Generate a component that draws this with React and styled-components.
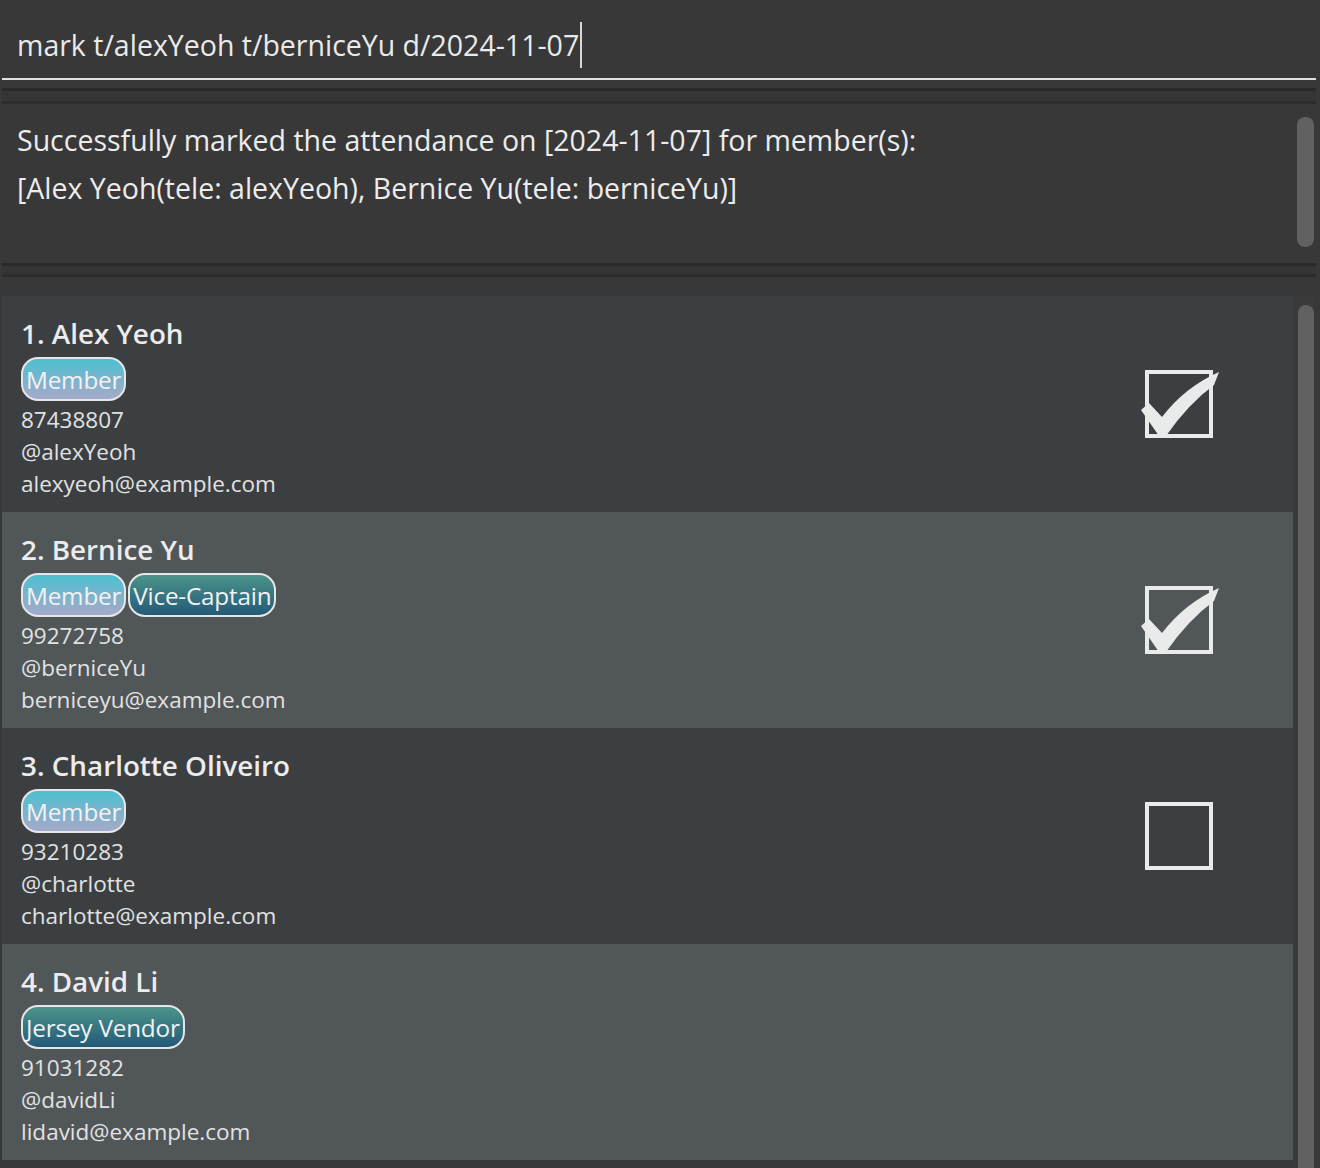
import styled, { createGlobalStyle } from 'styled-components';

const GlobalStyle = createGlobalStyle`
	html, body {
		margin: 0;
		padding: 0;
		background: #383838;
	}
	body {
		font-family: 'Open Sans', 'Noto Sans', sans-serif;
	}
`;

// attendance: true = marked, false = not marked, null = no box shown
const members = [
	{
		name: 'Alex Yeoh',
		tags: [{ label: 'Member', kind: 'member' }],
		phone: '87438807',
		tele: '@alexYeoh',
		email: 'alexyeoh@example.com',
		attendance: true,
	},
	{
		name: 'Bernice Yu',
		tags: [
			{ label: 'Member', kind: 'member' },
			{ label: 'Vice-Captain', kind: 'role' },
		],
		phone: '99272758',
		tele: '@berniceYu',
		email: 'berniceyu@example.com',
		attendance: true,
	},
	{
		name: 'Charlotte Oliveiro',
		tags: [{ label: 'Member', kind: 'member' }],
		phone: '93210283',
		tele: '@charlotte',
		email: 'charlotte@example.com',
		attendance: false,
	},
	{
		name: 'David Li',
		tags: [{ label: 'Jersey Vendor', kind: 'role' }],
		phone: '91031282',
		tele: '@davidLi',
		email: 'lidavid@example.com',
		attendance: null,
	},
];

const AttendanceBox = ({ checked }) => (
	<BoxIcon width='68' height='68' viewBox='0 0 68 68'>
		<rect x='2' y='2' width='64' height='64' fill='none' stroke='#e9eaea' strokeWidth='4' />
		{checked && (
			<path
				d='M -4 40 L 4 33 L 17 47 Q 40 17 74 2 L 69 15 Q 43 34 21 66 L 14 66 Z'
				fill='#e9eaea'
			/>
		)}
	</BoxIcon>
);

export default function App() {
	return (
		<Window>
			<GlobalStyle />
			<CommandBox>
				<CommandText>mark t/alexYeoh t/berniceYu d/2024-11-07</CommandText>
				<Caret />
			</CommandBox>
			<Splitter $lead={8} $height={16} />
			<ResultPane>
				<ResultText>
					Successfully marked the attendance on [2024-11-07] for member(s):
					<br />
					[Alex Yeoh(tele: alexYeoh), Bernice Yu(tele: berniceYu)]
				</ResultText>
				<ScrollThumb />
			</ResultPane>
			<Splitter $lead={0} $height={14} />
			<ListPane>
				<CardList>
					{members.map((m, i) => (
						<Card key={m.tele} $alt={i % 2 === 1}>
							<Details>
								<Name>
									{i + 1}. {m.name}
								</Name>
								<Tags>
									{m.tags.map((t) => (
										<Tag key={t.label} $kind={t.kind}>
											{t.label}
										</Tag>
									))}
								</Tags>
								<Line>{m.phone}</Line>
								<Line>{m.tele}</Line>
								<Line>{m.email}</Line>
							</Details>
							{m.attendance !== null && <AttendanceBox checked={m.attendance} />}
						</Card>
					))}
				</CardList>
				<ListTrack>
					<ListThumb />
				</ListTrack>
			</ListPane>
		</Window>
	);
}

const Window = styled.div`
	width: 1320px;
	height: 1168px;
	overflow: hidden;
	background: #383838;
	display: flex;
	flex-direction: column;
	color: #e8e8e8;
`;

const CommandBox = styled.div`
	height: 80px;
	flex: none;
	display: flex;
	align-items: center;
	box-sizing: border-box;
	margin: 0 4px 0 2px;
	padding: 12px 0 0 15px;
	border-bottom: 2px solid #e2e2e2;
`;

const CommandText = styled.span`
	font-size: 28.5px;
	color: #eaeaea;
	white-space: pre;
`;

const Caret = styled.span`
	width: 2px;
	height: 46px;
	background: #d8d8d8;
	margin-left: 1px;
`;

const Splitter = styled.div`
	flex: none;
	box-sizing: border-box;
	height: ${(p) => p.$height}px;
	margin: ${(p) => p.$lead}px 4px 0 2px;
	background: #353535;
	border-top: 3px solid #2a2a2a;
	border-bottom: 3px solid #2d2d2d;
`;

const ResultPane = styled.div`
	height: 159px;
	flex: none;
	position: relative;
	margin: 0 4px 0 2px;
	background: #383838;
	padding: 12px 0 0 15px;
	box-sizing: border-box;
`;

const ResultText = styled.div`
	font-size: 28.5px;
	line-height: 48px;
	color: #ececec;
`;

const ScrollThumb = styled.div`
	position: absolute;
	right: 2px;
	top: 13px;
	width: 17px;
	height: 130px;
	border-radius: 8px;
	background: #616161;
`;

const ListPane = styled.div`
	flex: 1;
	display: flex;
	padding: 19px 6px 0 2px;
	min-height: 0;
`;

const CardList = styled.div`
	flex: 1;
	display: flex;
	flex-direction: column;
`;

const Card = styled.div`
	height: 216px;
	flex: none;
	box-sizing: border-box;
	display: flex;
	align-items: center;
	justify-content: space-between;
	padding: 0 80px 0 19px;
	background: ${(p) => (p.$alt ? '#515658' : '#3c3f41')};
`;

const Details = styled.div`
	display: flex;
	flex-direction: column;
	align-self: flex-start;
	padding-top: 19px;
`;

const Name = styled.div`
	font-size: 27.8px;
	font-weight: 600;
	line-height: 36px;
	color: #ececec;
`;

const Tags = styled.div`
	display: flex;
	gap: 2px;
	margin: 6px 0 3px;
`;

const Tag = styled.span`
	height: 44px;
	box-sizing: border-box;
	display: flex;
	align-items: center;
	padding: 0 3px;
	border: 2.5px solid #e6e6e6;
	border-radius: 17px;
	font-size: 24.3px;
	letter-spacing: -0.2px;
	color: #f2f2f2;
	background: ${(p) =>
		p.$kind === 'member'
			? 'linear-gradient(#4cc0d0, #a6a9c9)'
			: 'linear-gradient(#4b948a, #235a78)'};
`;

const Line = styled.div`
	font-size: 22.5px;
	line-height: 32px;
	color: #e2e2e2;
`;

const BoxIcon = styled.svg`
	flex: none;
	overflow: visible;
`;

const ListTrack = styled.div`
	width: 21px;
	flex: none;
	background: #3a3a3a;
	padding: 9px 0 0 5px;
	box-sizing: border-box;
`;

const ListThumb = styled.div`
	height: 100%;
	width: 16px;
	border-radius: 8px 8px 0 0;
	background: #616161;
`;
